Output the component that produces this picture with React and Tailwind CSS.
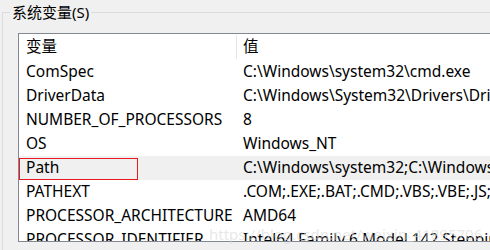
import React from "react";

const rows = [
    ["ComSpec", "C:\\Windows\\system32\\cmd.exe"],
    ["DriverData", "C:\\Windows\\System32\\Drivers\\DriverData"],
    ["NUMBER_OF_PROCESSORS", "8"],
    ["OS", "Windows_NT"],
    ["Path", "C:\\Windows\\system32;C:\\Windows;C:\\Windows\\System32\\Wbem"],
    ["PATHEXT", ".COM;.EXE;.BAT;.CMD;.VBS;.VBE;.JS;.JSE;.WSF;.WSH;.MSC"],
    ["PROCESSOR_ARCHITECTURE", "AMD64"],
    ["PROCESSOR_IDENTIFIER", "Intel64 Family 6 Model 142 Stepping 10, GenuineIntel"],
];

const App = () => {
    return (
        <div
            className="relative h-[250px] w-[490px] overflow-hidden bg-[#f0f0f0] text-[15.5px] text-black"
            style={{ fontFamily: '"Noto Sans", "Noto Sans CJK SC", sans-serif' }}
        >
            <div className="pl-[2px] pt-[12px]">
                <div className="h-[300px] border-l border-t border-[#dcdcdc] pl-[15px] pt-[20px]">
                    <div className="h-[209px] overflow-hidden border-y border-l border-[#828790] bg-white">
                        {/* header */}
                        <div className="flex h-[26px] items-center whitespace-nowrap">
                            <div className="w-[217px] pl-[7px]">变量</div>
                            <div className="h-[24px] w-px bg-[#e5e5e5]" />
                            <div className="pl-[6px]">值</div>
                        </div>
                        {rows.map((r, i) => (
                            <div
                                key={i}
                                className={`flex h-[24px] items-center whitespace-nowrap ${
                                    r[0] === "Path" ? "bg-[#f0f0f0]" : ""
                                }`}
                            >
                                <div className="w-[218px] shrink-0 pl-[7px]">{r[0]}</div>
                                <div className="pl-[6px]">{r[1]}</div>
                            </div>
                        ))}
                    </div>
                </div>
            </div>

            {/* group title */}
            <div className="absolute left-[10px] top-[3px] bg-[#f0f0f0] px-[2px] text-[15px] leading-[18px]">
                系统变量(S)
            </div>

            {/* red mark around Path */}
            <div className="absolute left-[19px] top-[158px] h-[22px] w-[119px] border border-[#e8191f]" />

            {/* watermark */}
            <div className="pointer-events-none absolute left-[209px] top-[223px] text-[15px] text-[#d8d8d8]/60">
                https://blog.csdn.net/weixin_41895706
            </div>
        </div>
    );
};

export default App;
